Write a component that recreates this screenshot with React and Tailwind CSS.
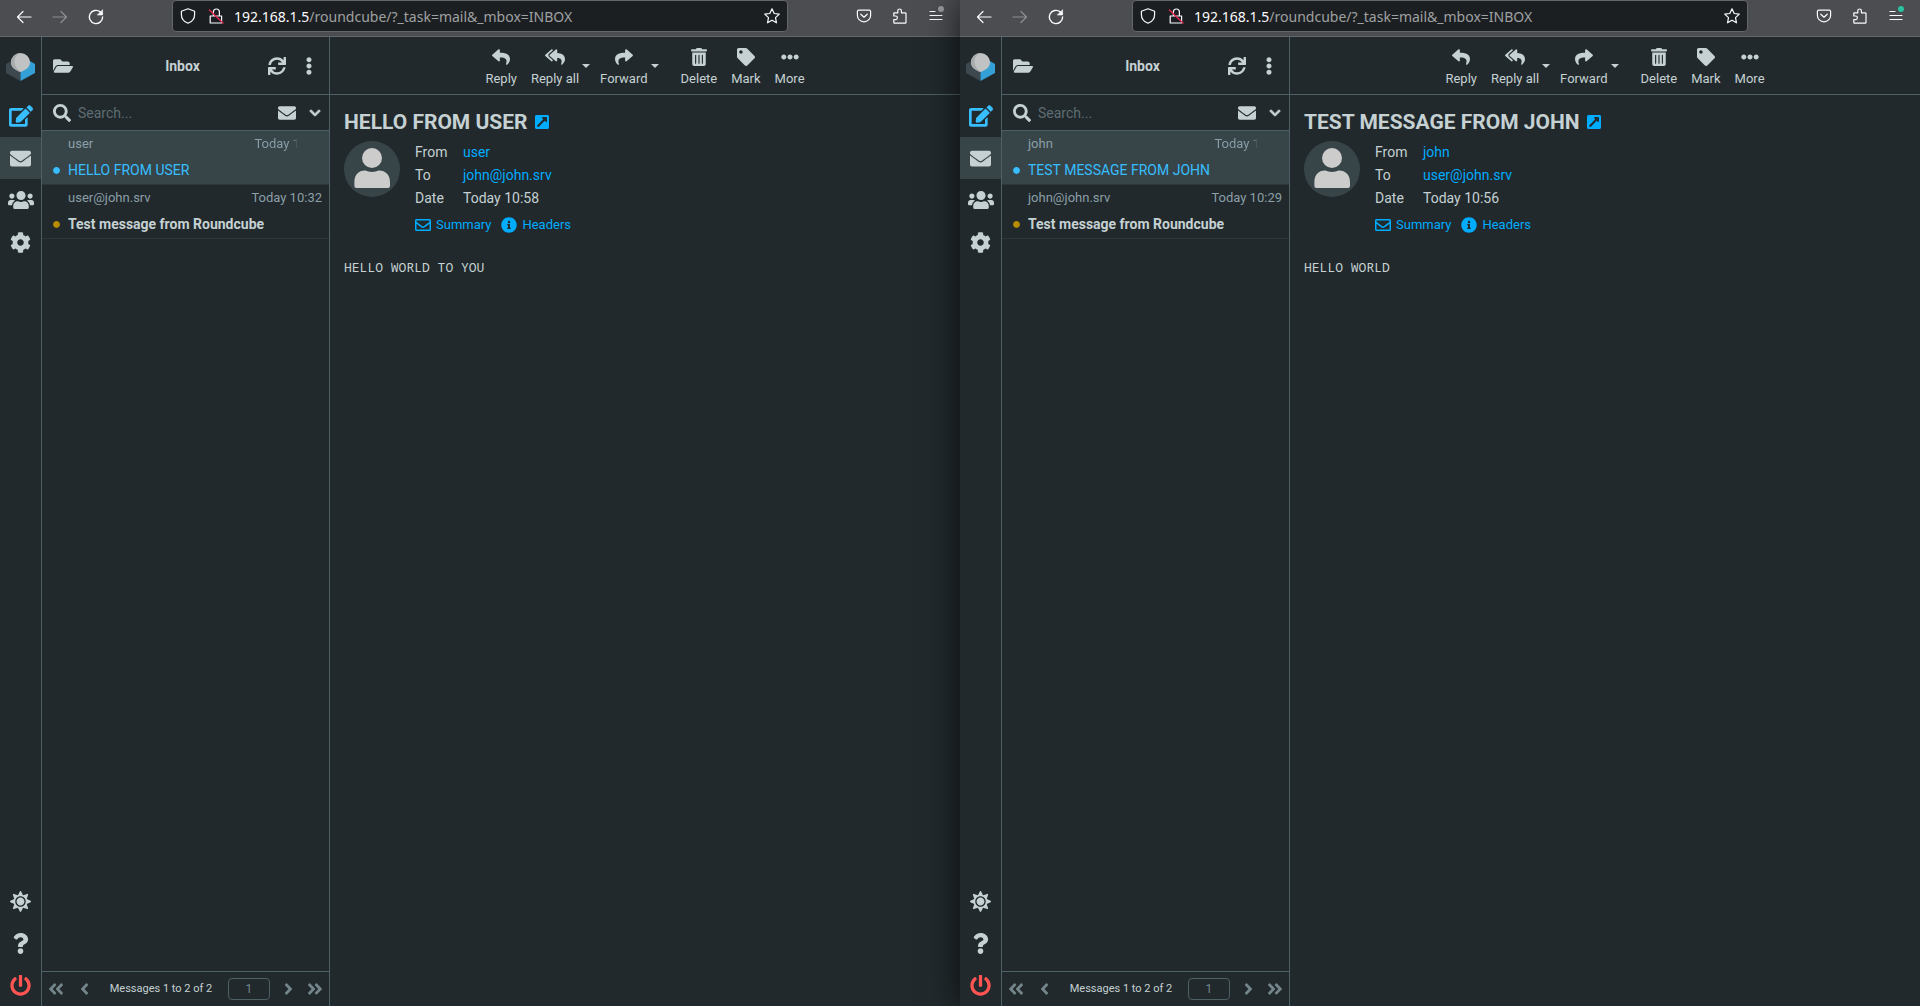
import React, { useState } from "react";
import {
  FaAngleDoubleLeft,
  FaAngleDoubleRight,
  FaAngleLeft,
  FaAngleRight,
  FaChevronDown,
  FaCircle,
  FaCog,
  FaEdit,
  FaEllipsisH,
  FaEllipsisV,
  FaEnvelope,
  FaExternalLinkSquareAlt,
  FaFolderOpen,
  FaInfoCircle,
  FaPowerOff,
  FaQuestion,
  FaRegEnvelope,
  FaReply,
  FaReplyAll,
  FaSearch,
  FaShare,
  FaSun,
  FaSync,
  FaTag,
  FaTrashAlt,
  FaUsers,
} from "react-icons/fa";

const sessions = [
  {
    id: "user",
    badge: "fill-[#9a9a9c]",
    messages: [
      { from: "user", date: "Today 1", subject: "HELLO FROM USER", selected: true },
      { from: "user@john.srv", date: "Today 10:32", subject: "Test message from Roundcube" },
    ],
    mail: {
      subject: "HELLO FROM USER",
      from: "user",
      to: "john@john.srv",
      date: "Today 10:58",
      body: "HELLO WORLD TO YOU",
    },
  },
  {
    id: "john",
    badge: "fill-[#2ac3a2]",
    messages: [
      { from: "john", date: "Today 1", subject: "TEST MESSAGE FROM JOHN", selected: true },
      { from: "john@john.srv", date: "Today 10:29", subject: "Test message from Roundcube" },
    ],
    mail: {
      subject: "TEST MESSAGE FROM JOHN",
      from: "john",
      to: "user@john.srv",
      date: "Today 10:56",
      body: "HELLO WORLD",
    },
  },
];

const LineIcon = ({ children, className = "" }) => (
  <svg
    viewBox="0 0 16 16"
    fill="none"
    stroke="currentColor"
    strokeWidth="1.2"
    strokeLinecap="round"
    strokeLinejoin="round"
    className={`size-4 shrink-0 ${className}`}
  >
    {children}
  </svg>
);

const BrowserBar = ({ badge }) => (
  <div className="flex h-[37px] shrink-0 items-start border-b border-[#63676a] bg-[#4b4d51] text-[#fbfbfe]">
    <div className="flex h-[33px] w-[172px] shrink-0 items-center gap-5 pl-4">
      <button aria-label="Back">
        <LineIcon>
          <path d="M15 8H1.5M7 2.5L1.5 8L7 13.5" />
        </LineIcon>
      </button>
      <button aria-label="Forward" className="text-[#8d8f92]">
        <LineIcon>
          <path d="M1 8H14.5M9 2.5L14.5 8L9 13.5" />
        </LineIcon>
      </button>
      <button aria-label="Reload">
        <LineIcon>
          <path d="M14.6 8A6.6 6.6 0 1 1 12.2 2.9L14 4.6" strokeWidth="1.4" />
          <path d="M14.6 1V6H9.6Z" fill="currentColor" strokeWidth="0.6" />
        </LineIcon>
      </button>
    </div>
    <div className="flex h-8 min-w-0 flex-1 items-center rounded border border-[#63676a] bg-[#1b1f21] px-[7px] text-[#fbfbfe]">
      <LineIcon>
        <path d="M8 .8L14.6 3.2V6.5C14.6 10.6 12 13.8 8 15.3C4 13.8 1.4 10.6 1.4 6.5V3.2Z" />
      </LineIcon>
      <LineIcon className="ml-3">
        <path d="M2.2 8H13.6V15H2.2ZM5.4 8V4A3 3 0 0 1 11.4 4V8" />
        <path d="M1.4 2L15 15" stroke="#e22850" strokeWidth="1.5" />
      </LineIcon>
      <div className="ml-2.5 flex-1 truncate pt-px font-['Noto_Sans',sans-serif] text-sm leading-5 text-[#a0a1a3]">
        <span className="text-[#fbfbfe]">192.168.1.5</span>/roundcube/?_task=mail&_mbox=INBOX
      </div>
      <button aria-label="Bookmark">
        <LineIcon>
          <path d="M8 .8L10.2 5.5L15.3 6.1L11.5 9.6L12.5 14.8L8 12.2L3.5 14.8L4.5 9.6L.7 6.1L5.8 5.5Z" />
        </LineIcon>
      </button>
    </div>
    <div className="flex h-8 w-[172px] shrink-0 items-center justify-end gap-5 pr-4">
      <button aria-label="Pocket">
        <LineIcon>
          <path d="M2.6 2.2H13.4Q14.6 2.2 14.6 3.4V7.4A6.6 6.4 0 0 1 1.4 7.4V3.4Q1.4 2.2 2.6 2.2ZM4.8 6.2L8 9.2L11.2 6.2" />
        </LineIcon>
      </button>
      <button aria-label="Extensions">
        <LineIcon>
          <path d="M2 4.8H5.8V2.8A1.8 1.8 0 0 1 9.4 2.8V4.8H13.2Q14 4.8 14 5.6V14.4Q14 15.2 13.2 15.2H2.4Q1.8 15.2 1.8 14.4V11.6H3.6A1.8 1.8 0 0 0 3.6 8H1.8V5" />
        </LineIcon>
      </button>
      <button aria-label="Application menu">
        <LineIcon className="overflow-visible">
          <path d="M2 3.5H7M2 7.5H14M2 11.5H14" />
          <circle cx="13" cy="1" r="3" stroke="none" className={badge} />
        </LineIcon>
      </button>
    </div>
  </div>
);

const Logo = () => (
  <svg viewBox="0 0 29 28" className="h-7 w-[29px]">
    <path d="M0 11L6 7.5L14.5 18.5V28L0 20Z" fill="#3d494e" />
    <path d="M29 11L23 7.5L14.5 18.5V28L29 20Z" fill="#34a0d6" />
    <path d="M5 9.5A9.5 9.5 0 0 1 24 9.5C24 14 20 17 14.5 19C9 17 5 14 5 9.5Z" fill="#c1c2c4" />
    <path d="M14.5 0A9.5 9.5 0 0 0 5 9.5C5 14 9 17 14.5 19C6 12 7 3 14.5 0Z" fill="#a9abad" />
  </svg>
);

const TaskButton = ({ icon: Icon, label, size = "size-[21px]", className = "" }) => (
  <button aria-label={label} className={`flex h-[42px] w-full items-center justify-center ${className}`}>
    <Icon className={size} />
  </button>
);

const TaskMenu = () => (
  <nav className="flex w-[42px] shrink-0 flex-col border-r border-[#4d6066]">
    <div className="flex h-[58px] items-center justify-center pt-0.5">
      <Logo />
    </div>
    <TaskButton icon={FaEdit} label="Compose" size="size-6" className="text-[#37beff]" />
    <TaskButton icon={FaEnvelope} label="Mail" className="bg-[#374549]" />
    <TaskButton icon={FaUsers} label="Contacts" size="size-[26px]" />
    <TaskButton icon={FaCog} label="Settings" />
    <div className="flex-1" />
    <TaskButton icon={FaSun} label="Light mode" />
    <TaskButton icon={FaQuestion} label="About" />
    <TaskButton icon={FaPowerOff} label="Logout" className="text-[#ff5552]" />
  </nav>
);

const MessageRow = ({ message }) => (
  <li
    className={`border-b border-[#2c373a] pr-[7px] pb-px pl-[11px] ${message.selected ? "bg-[#374549]" : ""}`}
  >
    <div className="flex h-[26px] items-center justify-between pl-[15px] text-[13px] text-[#8b9fa7]">
      <span>{message.from}</span>
      {/* the date of the open message fades out under the row actions */}
      {message.selected ? (
        <span className="mr-[22px] bg-linear-to-r from-[#8b9fa7] from-85% to-transparent to-95% bg-clip-text text-transparent">
          {message.date}
        </span>
      ) : (
        <span>{message.date}</span>
      )}
    </div>
    <div className="flex h-[26px] items-center gap-2">
      <FaCircle className={`size-[7px] ${message.selected ? "text-[#37beff]" : "text-[#b88b00]"}`} />
      <a
        href="#message"
        className={`truncate ${message.selected ? "text-[#37beff]" : "font-bold"}`}
      >
        {message.subject}
      </a>
    </div>
  </li>
);

const MessageList = ({ id, messages }) => {
  const [search, setSearch] = useState("");
  const [page, setPage] = useState("1");

  return (
    <section className="flex w-[288px] shrink-0 flex-col border-r border-[#4d6066]">
      <header className="flex h-[58px] items-center border-b border-[#4d6066] px-[11px]">
        <button aria-label="Folders" className="w-11">
          <FaFolderOpen className="size-5" />
        </button>
        <h2 className="flex-1 text-center font-bold">Inbox</h2>
        <button aria-label="Refresh">
          <FaSync className="size-[18px]" />
        </button>
        <button aria-label="Options" className="ml-[14px]">
          <FaEllipsisV className="size-[18px]" />
        </button>
      </header>
      <div className="flex h-9 items-center border-b border-[#4d6066] pr-2 pl-[11px]">
        <label htmlFor={`search-${id}`} aria-label="Search">
          <FaSearch className="size-[18px]" />
        </label>
        <input
          id={`search-${id}`}
          type="text"
          placeholder="Search..."
          value={search}
          onChange={(e) => setSearch(e.target.value)}
          className="ml-[7px] w-full min-w-0 flex-1 outline-none placeholder:text-[#5d6d73]"
        />
        <button aria-label="Unread only">
          <FaEnvelope className="size-[18px]" />
        </button>
        <button aria-label="Search options" className="ml-[13px]">
          <FaChevronDown className="size-3 stroke-current stroke-[40]" />
        </button>
      </div>
      <ul className="flex-1">
        {messages.map((m) => (
          <MessageRow key={m.from} message={m} />
        ))}
      </ul>
      <footer className="flex h-[35px] items-center justify-between border-t border-[#4d6066] px-1.5 text-[#74868c]">
        <div className="flex items-center gap-[15px]">
          <button aria-label="First page">
            <FaAngleDoubleLeft className="h-[18px] w-4" />
          </button>
          <button aria-label="Previous page">
            <FaAngleLeft className="h-[18px] w-[11px]" />
          </button>
        </div>
        <span className="pl-1 text-[11px] text-[#c5d1d3]">Messages 1 to 2 of 2</span>
        <div className="flex items-center gap-[13px]">
          <input
            type="text"
            aria-label="Page"
            value={page}
            onChange={(e) => setPage(e.target.value)}
            className="h-[22px] w-[42px] rounded border border-[#4d6066] text-center text-xs"
          />
          <button aria-label="Next page">
            <FaAngleRight className="h-[18px] w-[11px]" />
          </button>
          <button aria-label="Last page">
            <FaAngleDoubleRight className="h-[18px] w-4" />
          </button>
        </div>
      </footer>
    </section>
  );
};

const ToolButton = ({ icon: Icon, label }) => (
  <button className="flex flex-col items-center gap-[3px] px-[7px] pt-[5px] text-[13px] leading-5">
    <Icon className="h-[18px] w-5" />
    {label}
  </button>
);

const DropButton = ({ label }) => (
  <button aria-label={label} className="mr-[3px] -ml-1 w-2">
    <svg viewBox="0 0 8 4" className="h-1 w-2 fill-current">
      <path d="M0 0H8L4 4Z" />
    </svg>
  </button>
);

const Avatar = () => (
  <svg viewBox="0 0 56 56" className="size-14 shrink-0">
    <circle cx="28" cy="28" r="28" fill="#374549" />
    <circle cx="28" cy="17" r="10" fill="#cccccc" />
    <path
      d="M10.4 45V41C10.4 33.5 15 29.6 20.5 29.6C23 29.6 24 31 28 31C32 31 33 29.6 35.5 29.6C41 29.6 46 33.5 46 41V45Q46 47 44 47H12.4Q10.4 47 10.4 45Z"
      fill="#cccccc"
    />
  </svg>
);

const MessageView = ({ mail }) => (
  <main className="flex min-w-0 flex-1 flex-col">
    <div className="flex h-[58px] items-center justify-center border-b border-[#4d6066]">
      <ToolButton icon={FaReply} label="Reply" />
      <ToolButton icon={FaReplyAll} label="Reply all" />
      <DropButton label="Reply all options" />
      <ToolButton icon={FaShare} label="Forward" />
      <DropButton label="Forward options" />
      <div className="w-3" />
      <ToolButton icon={FaTrashAlt} label="Delete" />
      <ToolButton icon={FaTag} label="Mark" />
      <ToolButton icon={FaEllipsisH} label="More" />
    </div>
    <div className="px-[14px] pt-[13px]">
      <h1 className="flex items-center gap-1.5 text-[21px] leading-7 font-bold">
        {mail.subject}
        <a href="#open" aria-label="Open in new window" className="text-[#00acff]">
          <FaExternalLinkSquareAlt className="size-4" />
        </a>
      </h1>
      <div className="mt-[5px] flex gap-[15px]">
        <Avatar />
        <div>
          <table className="leading-[23px]">
            <tbody>
              <tr>
                <th className="w-12 text-left font-normal">From</th>
                <td>
                  <a href="#from" className="text-[#00acff]">{mail.from}</a>
                </td>
              </tr>
              <tr>
                <th className="text-left font-normal">To</th>
                <td>
                  <a href="#to" className="text-[#00acff]">{mail.to}</a>
                </td>
              </tr>
              <tr>
                <th className="text-left font-normal">Date</th>
                <td>{mail.date}</td>
              </tr>
            </tbody>
          </table>
          <div className="mt-[5px] flex gap-2.5 text-[13px] leading-5 text-[#00acff]">
            <a href="#summary" className="flex items-center gap-[5px]">
              <FaRegEnvelope className="size-4" />
              Summary
            </a>
            <a href="#headers" className="flex items-center gap-[5px]">
              <FaInfoCircle className="size-4" />
              Headers
            </a>
          </div>
        </div>
      </div>
      <pre className="mt-[22px] font-['Noto_Sans_Mono','DejaVu_Sans_Mono',monospace] text-[13px] leading-5">
        {mail.body}
      </pre>
    </div>
  </main>
);

const MailWindow = ({ session }) => (
  <div className="relative flex min-w-0 flex-1 flex-col bg-[#21292c] shadow-[0_0_32px_rgba(0,0,0,0.7)]">
    <BrowserBar badge={session.badge} />
    <div className="flex min-h-0 flex-1">
      <TaskMenu />
      <MessageList id={session.id} messages={session.messages} />
      <MessageView mail={session.mail} />
    </div>
  </div>
);

const App = () => {
  return (
    <div className="flex min-h-screen overflow-hidden bg-[#21292c] font-[Roboto,sans-serif] text-sm text-[#c5d1d3]">
      {sessions.map((s) => (
        <MailWindow key={s.id} session={s} />
      ))}
    </div>
  );
};

export default App;
